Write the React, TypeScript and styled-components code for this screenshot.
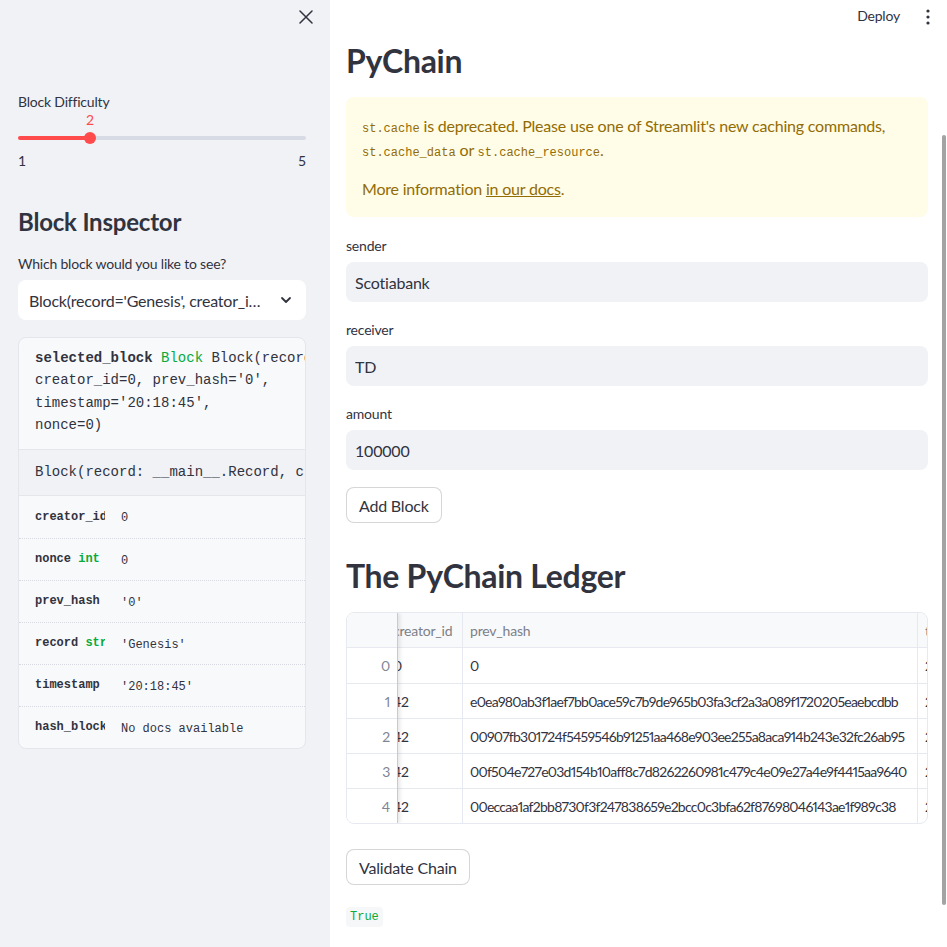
import React from "react";
import styled, { createGlobalStyle } from "styled-components";

const GlobalStyle = createGlobalStyle`
  html, body { margin: 0; padding: 0; }
  body {
    font-family: Lato, "Noto Sans", sans-serif;
    color: #31333f;
    background: #ffffff;
    letter-spacing: -0.2px;
  }
  * { box-sizing: border-box; }
`;

const MONO = `"Liberation Mono", "DejaVu Sans Mono", monospace`;

const Page = styled.div`
  display: flex;
  width: 947px;
  height: 947px;
  overflow: hidden;
`;

/* ---------- Sidebar ---------- */
const Sidebar = styled.aside`
  width: 330px;
  flex: none;
  background: #f0f2f6;
  padding: 0 24px 0 18px;
  display: flex;
  flex-direction: column;
`;

const CloseBar = styled.div`
  height: 34px;
  display: flex;
  justify-content: flex-end;
  align-items: center;
  margin-right: -12px;
`;

const IconButton = styled.button`
  width: 24px;
  height: 24px;
  padding: 0;
  border: none;
  background: transparent;
  display: flex;
  align-items: center;
  justify-content: center;
  color: #31333f;
`;

const WidgetLabel = styled.div<{ $mt?: number }>`
  font-size: 14px;
  line-height: 20px;
  color: #31333f;
  margin-top: ${(p) => p.$mt ?? 0}px;
`;

const SliderWrap = styled.div`
  display: flex;
  flex-direction: column;
`;

const SliderTrack = styled.div`
  position: relative;
  margin-top: 20px;
  height: 12px;
  display: flex;
  align-items: center;
`;

const TrackBar = styled.div`
  width: 100%;
  height: 4px;
  border-radius: 2px;
`;

const Thumb = styled.div`
  position: absolute;
  top: 0;
  width: 12px;
  height: 12px;
  margin-left: -6px;
  border-radius: 50%;
  background: #ff4b4b;
`;

const ThumbValue = styled.div`
  position: absolute;
  bottom: 14px;
  left: 50%;
  transform: translateX(-50%);
  font-size: 14px;
  line-height: 20px;
  color: #ff4b4b;
`;

const TickRow = styled.div`
  display: flex;
  justify-content: space-between;
  margin-top: 7px;
  font-size: 14px;
  line-height: 20px;
`;

const SideHeading = styled.h2`
  margin: 36px 0 0;
  font-size: 24px;
  line-height: 29px;
  font-weight: 700;
  color: #31333f;
`;

const SelectBox = styled.div`
  margin-top: 6px;
  height: 40px;
  background: #ffffff;
  border-radius: 8px;
  display: flex;
  align-items: center;
  padding: 0 14px 0 11px;
  font-size: 16px;
`;

const SelectValue = styled.div`
  flex: 1;
  min-width: 0;
  white-space: nowrap;
  overflow: hidden;
  text-overflow: ellipsis;
  margin-right: 18px;
`;

const HelpPanel = styled.div`
  margin-top: 17px;
  border: 1px solid #e4e6eb;
  border-radius: 8px;
  overflow: hidden;
  background: #f8f9fb;
  font-family: ${MONO};
  letter-spacing: 0;
  color: #31333f;
`;

const HelpHead = styled.div`
  padding: 9px 16px 12px;
  font-size: 14px;
  line-height: 22.4px;
  white-space: pre;
`;

const Bold = styled.span`
  font-weight: 700;
`;

const TypeName = styled.span`
  color: #09ab3b;
`;

const HelpDoc = styled.div`
  height: 47px;
  background: #f0f2f6;
  border-top: 1px solid #e4e6eb;
  border-bottom: 1px solid #e4e6eb;
  padding: 0 16px;
  display: flex;
  align-items: center;
  font-size: 14px;
  white-space: pre;
`;

const Member = styled.div`
  height: 42px;
  display: flex;
  align-items: center;
  padding-left: 16px;
  font-size: 12px;
  & + & {
    border-top: 1px dotted #d6d9df;
  }
`;

const MemberName = styled.div`
  width: 70px;
  flex: none;
  overflow: hidden;
  white-space: pre;
  font-weight: 700;
`;

const MemberValue = styled.div`
  margin-left: 16px;
  margin-top: 3px;
  white-space: pre;
`;

/* ---------- Main ---------- */
const Main = styled.main`
  flex: 1;
  min-width: 0;
  overflow: hidden;
  position: relative;
  background: #ffffff;
  display: flex;
  flex-direction: column;
`;

const TopBar = styled.header`
  height: 34px;
  display: flex;
  justify-content: flex-end;
  align-items: center;
  gap: 16px;
  padding-right: 7px;
`;

const DeployButton = styled.span`
  font-size: 14px;
  line-height: 20px;
  margin-top: -2px;
  color: #31333f;
`;

const Content = styled.div`
  padding: 0 19px 0 16px;
  min-width: 0;
  display: flex;
  flex-direction: column;
`;

const Title = styled.h1<{ $mt: number }>`
  margin: ${(p) => p.$mt}px 0 0;
  font-size: 32px;
  line-height: 48px;
  font-weight: 700;
  letter-spacing: -0.3px;
  color: #31333f;
`;

const Alert = styled.div`
  margin-top: 12px;
  background: #fffce7;
  color: #926c05;
  border-radius: 8px;
  padding: 17px 16px 16px;
  font-size: 16px;
  line-height: 24px;
`;

const AlertPara = styled.p`
  margin: 0;
  & + & {
    margin-top: 15px;
  }
`;

const InlineCode = styled.code`
  font-family: ${MONO};
  font-size: 12px;
  line-height: 1;
  letter-spacing: 0;
`;

const DocLink = styled.a`
  color: #926c05;
  text-decoration: underline;
`;

const Field = styled.div<{ $mt: number }>`
  margin-top: ${(p) => p.$mt}px;
  display: flex;
  flex-direction: column;
`;

const TextInput = styled.input`
  margin-top: 6px;
  height: 40px;
  border: none;
  outline: none;
  border-radius: 8px;
  background: #f0f2f6;
  padding: 0 9px;
  font-family: Lato, "Noto Sans", sans-serif;
  font-size: 16px;
  letter-spacing: -0.2px;
  color: #31333f;
`;

const Button = styled.button<{ $mt: number }>`
  margin-top: ${(p) => p.$mt}px;
  align-self: flex-start;
  height: 36px;
  padding: 0 12px;
  border: 1px solid rgba(49, 51, 63, 0.2);
  border-radius: 8px;
  background: #ffffff;
  font-family: Lato, "Noto Sans", sans-serif;
  font-size: 16px;
  letter-spacing: -0.2px;
  color: #31333f;
`;

const Grid = styled.div`
  margin-top: 12px;
  min-width: 0;
  border: 1px solid #e6e9ef;
  border-radius: 8px;
  overflow: hidden;
  display: flex;
  font-size: 14px;
  color: #31333f;
`;

const IndexCol = styled.div`
  width: 51px;
  flex: none;
  border-right: 1px solid #c7cad1;
  box-shadow: 2px 0 4px rgba(0, 0, 0, 0.1);
  position: relative;
  z-index: 1;
  background: #ffffff;
`;

const Scroller = styled.div`
  flex: 1;
  min-width: 0;
  overflow: hidden;
`;

const ScrollContent = styled.div<{ $offset: number }>`
  display: flex;
  width: max-content;
  margin-left: -${(p) => p.$offset}px;
`;

const Column = styled.div<{ $w: number }>`
  width: ${(p) => p.$w}px;
  flex: none;
  border-right: 1px solid #e6e9ef;
`;

const HeadCell = styled.div<{ $right?: boolean }>`
  height: 35px;
  background: #f8f9fb;
  border-bottom: 1px solid #e6e9ef;
  display: flex;
  align-items: center;
  justify-content: ${(p) => (p.$right ? "flex-end" : "flex-start")};
  padding: 0 7px;
  color: #7d7f88;
  white-space: nowrap;
  overflow: hidden;
`;

const Cell = styled.div<{ $index?: boolean; $tight?: boolean }>`
  height: 35px;
  display: flex;
  align-items: center;
  justify-content: ${(p) => (p.$index ? "flex-end" : "flex-start")};
  padding: 0 7px;
  white-space: nowrap;
  overflow: hidden;
  color: ${(p) => (p.$index ? "#808495" : "#31333f")};
  font-variant-numeric: proportional-nums;
  letter-spacing: ${(p) => (p.$tight ? "-0.75px" : "-0.2px")};
  & + & {
    border-top: 1px solid #e6e9ef;
  }
`;

const ResultCode = styled.code`
  margin-top: 22px;
  align-self: flex-start;
  height: 20px;
  padding: 0 4px;
  display: flex;
  align-items: center;
  background: #f6f7f9;
  border-radius: 4px;
  color: #09ab3b;
  font-family: ${MONO};
  font-size: 12px;
  letter-spacing: 0;
`;

const ScrollThumb = styled.div`
  position: absolute;
  right: 1px;
  top: 135px;
  width: 4px;
  height: 770px;
  border-radius: 2px;
  background: #a3a3a3;
`;

/* ---------- Data ---------- */
const ledger = [
  { creator: "0", hash: "0", ts: "20:18:45" },
  { creator: "42", hash: "e0ea980ab3f1aef7bb0ace59c7b9de965b03fa3cf2a3a089f1720205eaebcdbb", ts: "20:19:02" },
  { creator: "42", hash: "00907fb301724f5459546b91251aa468e903ee255a8aca914b243e32fc26ab95", ts: "20:19:10" },
  { creator: "42", hash: "00f504e727e03d154b10aff8c7d8262260981c479c4e09e27a4e9f4415aa9640", ts: "20:19:18" },
  { creator: "42", hash: "00eccaa1af2bb8730f3f247838659e2bcc0c3bfa62f87698046143ae1f989c38", ts: "20:19:25" },
];

const members = [
  { name: "creator_id int", value: "0" },
  { name: "nonce ", type: "int", value: "0" },
  { name: "prev_hash str", value: "'0'" },
  { name: "record ", type: "str", value: "'Genesis'" },
  { name: "timestamp str", value: "'20:18:45'" },
  { name: "hash_block method", value: "No docs available" },
];

function Slider({ min, max, value }: { min: number; max: number; value: number }) {
  const pct = ((value - min) / (max - min)) * 100;
  return (
    <SliderWrap>
      <SliderTrack>
        <TrackBar
          style={{
            background: `linear-gradient(to right, #ff4b4b 0%, #ff4b4b ${pct}%, #d7dbe4 ${pct}%, #d7dbe4 100%)`,
          }}
        />
        <Thumb style={{ left: `${pct}%` }}>
          <ThumbValue>{value}</ThumbValue>
        </Thumb>
      </SliderTrack>
      <TickRow>
        <span>{min}</span>
        <span>{max}</span>
      </TickRow>
    </SliderWrap>
  );
}

export default function App() {
  return (
    <>
      <GlobalStyle />
      <Page>
        <Sidebar>
          <CloseBar>
            <IconButton aria-label="Close sidebar">
              <svg width="14" height="14" viewBox="0 0 14 14" fill="none" stroke="#31333f" strokeWidth="1.5" strokeLinecap="round">
                <path d="M1 1 L13 13 M13 1 L1 13" />
              </svg>
            </IconButton>
          </CloseBar>
          <WidgetLabel $mt={58}>Block Difficulty</WidgetLabel>
          <Slider min={1} max={5} value={2} />
          <SideHeading>Block Inspector</SideHeading>
          <WidgetLabel $mt={18}>Which block would you like to see?</WidgetLabel>
          <SelectBox>
            <SelectValue>Block(record='Genesis', creator_id=0, prev_hash='0', timestamp='20:18:45', nonce=0)</SelectValue>
            <svg width="12" height="8" viewBox="0 0 12 8" fill="none" stroke="#31333f" strokeWidth="1.8" strokeLinecap="round" strokeLinejoin="round">
              <path d="M2 2 L6 6 L10 2" />
            </svg>
          </SelectBox>
          <HelpPanel>
            <HelpHead>
              <Bold>selected_block</Bold> <TypeName>Block</TypeName> Block(record='Genesis',{"\n"}creator_id=0, prev_hash='0',{"\n"}timestamp='20:18:45',{"\n"}nonce=0)
            </HelpHead>
            <HelpDoc>Block(record: __main__.Record, creator_id: int, prev_hash: str = '0')</HelpDoc>
            {members.map((m) => (
              <Member key={m.name}>
                <MemberName>
                  {m.name}
                  {m.type && <TypeName>{m.type}</TypeName>}
                </MemberName>
                <MemberValue>{m.value}</MemberValue>
              </Member>
            ))}
          </HelpPanel>
        </Sidebar>

        <Main>
          <TopBar>
            <DeployButton>Deploy</DeployButton>
            <IconButton aria-label="Main menu">
              <svg width="4" height="16" viewBox="0 0 4 16" fill="#31333f">
                <circle cx="2" cy="2" r="1.6" />
                <circle cx="2" cy="8" r="1.6" />
                <circle cx="2" cy="14" r="1.6" />
              </svg>
            </IconButton>
          </TopBar>
          <Content>
            <Title $mt={3}>PyChain</Title>
            <Alert>
              <AlertPara>
                <InlineCode>st.cache</InlineCode> is deprecated. Please use one of Streamlit's new caching commands,{" "}
                <InlineCode>st.cache_data</InlineCode> or <InlineCode>st.cache_resource</InlineCode>.
              </AlertPara>
              <AlertPara>
                More information <DocLink href="#">in our docs</DocLink>.
              </AlertPara>
            </Alert>
            <Field $mt={19}>
              <WidgetLabel>sender</WidgetLabel>
              <TextInput defaultValue="Scotiabank" />
            </Field>
            <Field $mt={18}>
              <WidgetLabel>receiver</WidgetLabel>
              <TextInput defaultValue="TD" />
            </Field>
            <Field $mt={18}>
              <WidgetLabel>amount</WidgetLabel>
              <TextInput defaultValue="100000" />
            </Field>
            <Button $mt={17}>Add Block</Button>
            <Title $mt={29}>The PyChain Ledger</Title>
            <Grid>
              <IndexCol>
                <HeadCell $right />
                {ledger.map((_, i) => (
                  <Cell key={i} $index>
                    {i}
                  </Cell>
                ))}
              </IndexCol>
              <Scroller>
                <ScrollContent $offset={12}>
                  <Column $w={77}>
                    <HeadCell>creator_id</HeadCell>
                    {ledger.map((r, i) => (
                      <Cell key={i}>{r.creator}</Cell>
                    ))}
                  </Column>
                  <Column $w={455}>
                    <HeadCell>prev_hash</HeadCell>
                    {ledger.map((r, i) => (
                      <Cell key={i} $tight>
                        {r.hash}
                      </Cell>
                    ))}
                  </Column>
                  <Column $w={100}>
                    <HeadCell>timestamp</HeadCell>
                    {ledger.map((r, i) => (
                      <Cell key={i}>{r.ts}</Cell>
                    ))}
                  </Column>
                </ScrollContent>
              </Scroller>
            </Grid>
            <Button $mt={25}>Validate Chain</Button>
            <ResultCode>True</ResultCode>
          </Content>
          <ScrollThumb />
        </Main>
      </Page>
    </>
  );
}
